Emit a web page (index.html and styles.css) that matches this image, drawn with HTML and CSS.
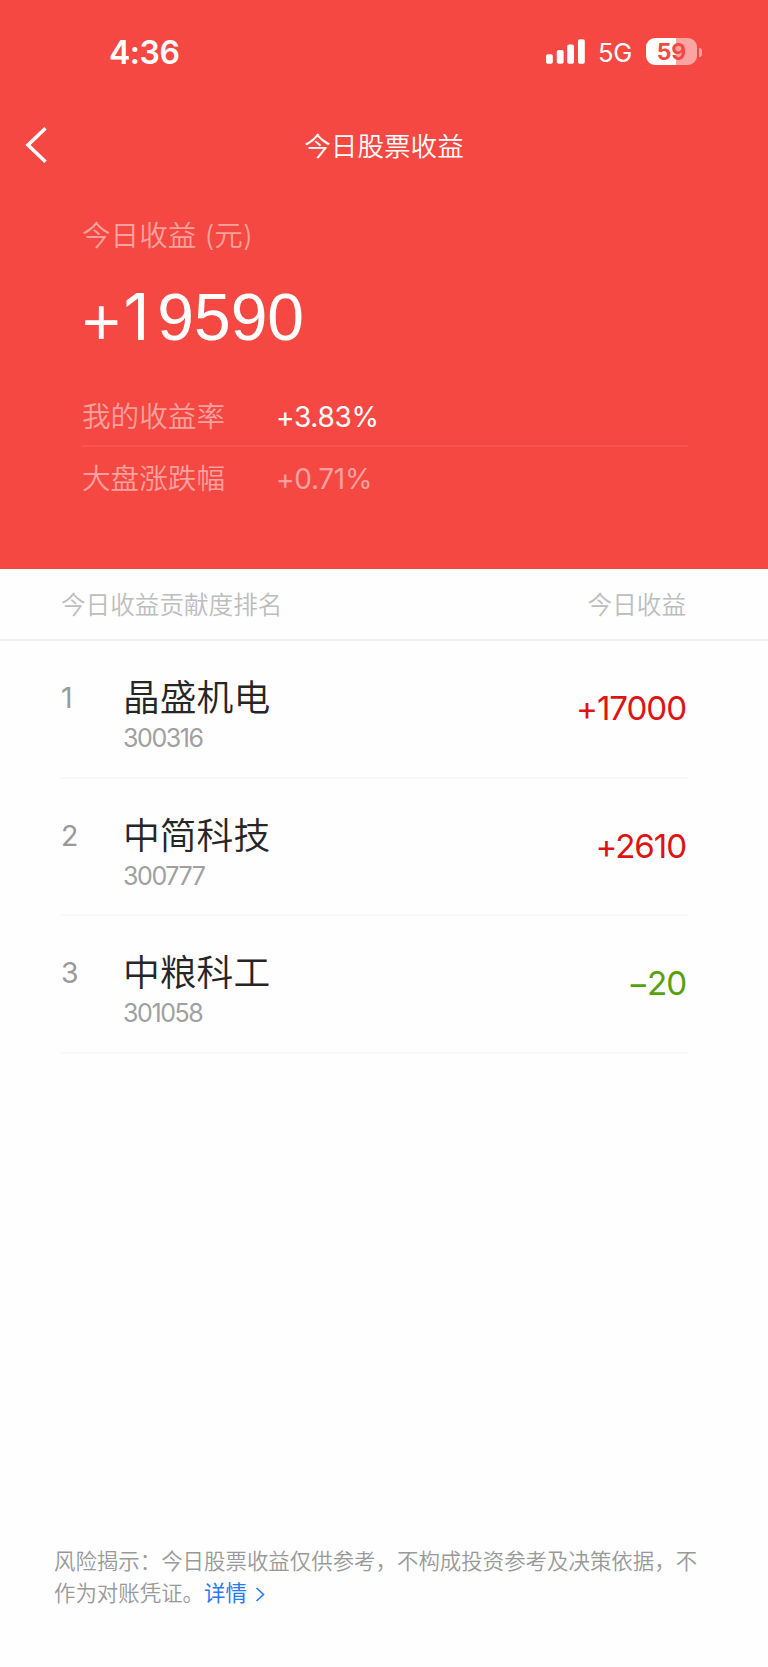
FILE: index.html
```
<!DOCTYPE html>
<html lang="zh-CN">
<head>
	<meta charset="UTF-8">
	<title>今日股票收益</title>
	<link rel="stylesheet" href="styles.css">
</head>
<body>
<div class="header">
	<div class="status">
		<span class="time">4:36</span>
		<svg class="signal" width="40" height="26" viewBox="0 0 40 26" fill="#fff">
			<rect x="0" y="15.3" width="6.8" height="9.5" rx="1.8"/>
			<rect x="10.8" y="11" width="6.8" height="13.8" rx="1.8"/>
			<rect x="21.2" y="5.5" width="6.8" height="19.3" rx="1.8"/>
			<rect x="32" y="0.2" width="6.8" height="24.6" rx="1.8"/>
		</svg>
		<span class="net">5G</span>
		<span class="battery">59</span>
		<span class="cap"></span>
	</div>
	<div class="nav">
		<svg class="back" width="24" height="38" viewBox="0 0 24 38" fill="none" stroke="#fff" stroke-width="3.6">
			<path d="M21.5 2.2L4 19L21.5 35.8"/>
		</svg>
		<h1>今日股票收益</h1>
	</div>
	<div class="total">
		<p class="label">今日收益 (元)</p>
		<p class="num"><span class="plus">+</span><span class="one">1</span>9590</p>
		<p class="rate"><span class="label">我的收益率</span><b>+3.83%</b></p>
		<p class="rate market"><span class="label">大盘涨跌幅</span><b>+0.71%</b></p>
	</div>
</div>
<div class="thead"><span>今日收益贡献度排名</span><span>今日收益</span></div>
<ul class="list">
	<li>
		<span class="rank">1</span>
		<div class="stock"><h3>晶盛机电</h3><p>300316</p></div>
		<span class="money up">+17000</span>
	</li>
	<li>
		<span class="rank">2</span>
		<div class="stock"><h3>中简科技</h3><p>300777</p></div>
		<span class="money up">+2610</span>
	</li>
	<li>
		<span class="rank">3</span>
		<div class="stock"><h3>中粮科工</h3><p>301058</p></div>
		<span class="money down">−20</span>
	</li>
</ul>
<div class="tips">
	风险揭示：今日股票收益仅供参考，不构成投资参考及决策依据，不作为对账凭证。<a class="more">详情<svg width="10" height="15" viewBox="0 0 10 15" fill="none" stroke="#2b78f6" stroke-width="1.6"><path d="M1.5 1L8.5 7.5L1.5 14"/></svg></a>
</div>
</body>
</html>
```

FILE: styles.css
```
body,ul,li,h1,h3,p{
	margin: 0;
	padding: 0;
}
li{
	list-style: none;
}
h1,h3,b{
	font-weight: normal;
}
body{
	display: flex;
	flex-direction: column;
	height: 1667px;
	background: #fefefe;
	font-family: Inter, "Noto Sans CJK SC", sans-serif;
	font-weight: 400;
	overflow: hidden;
}

/* 顶部红色区域 */
.header{
	box-sizing: border-box;
	height: 569px;
	flex: none;
	background: #f64843;
	color: #fff;
}
.status{
	display: flex;
	align-items: center;
	height: 104px;
	padding-left: 109px;
}
.time{
	width: 437px;
	font-size: 32px;
	font-weight: 600;
	letter-spacing: -0.5px;
}
.signal{
	margin-right: 12px;
}
.net{
	width: 48px;
	padding-top: 1px;
	font-size: 25.5px;
	letter-spacing: -0.3px;
}
.battery{
	width: 51px;
	height: 27px;
	border-radius: 9px;
	background: linear-gradient(90deg, #fff 59%, #fba4a1 59%);
	color: #f64843;
	font-size: 23px;
	font-weight: 700;
	line-height: 28px;
	text-align: center;
	margin-top: -1px;
}
.cap{
	width: 3px;
	height: 9px;
	margin-left: 2px;
	border-radius: 0 3px 3px 0;
	background: #fba4a1;
}
.nav{
	display: grid;
	grid-template-columns: 120px 1fr 120px;
	align-items: center;
	height: 84px;
}
.back{
	margin: -2px 0 0 24px;
}
.nav h1{
	font-size: 26.6px;
	font-weight: 350;
	line-height: 40px;
	text-align: center;
}
.total{
	padding: 18px 80px 0 82px;
}
.label{
	color: #fba19e;
	font-size: 28.6px;
	font-weight: 350;
	line-height: 60px;
}
.num{
	height: 119px;
	font-family: "Liberation Sans", sans-serif;
	font-size: 66px;
	line-height: 103px;
}
.plus{
	line-height: 1;
	vertical-align: -5px;
}
/* 数字1单独用无衬脚的字形 */
.one{
	display: inline-block;
	box-sizing: border-box;
	width: 36.7px;
	padding-left: 3px;
	font-family: Inter, sans-serif;
	font-size: 64px;
	line-height: 1;
}
.rate{
	display: flex;
	align-items: center;
	height: 62px;
	padding-top: 3px;
	border-bottom: 2px solid #f8534e;
	box-sizing: border-box;
}
.rate .label{
	width: 194px;
}
.rate b{
	font-size: 28px;
	letter-spacing: -0.3px;
}
.market{
	padding-top: 1px;
	border: 0;
	color: #fba19e;
}

/* 排名列表 */
.thead{
	display: flex;
	justify-content: space-between;
	height: 70px;
	padding: 0 82px 0 61px;
	border-bottom: 2px solid #f1f1f1;
	color: #bdbdbd;
	font-size: 24.6px;
	font-weight: 350;
	line-height: 73px;
}
.list{
	padding: 0 80px 0 61px;
}
.list li{
	display: flex;
	height: 135.5px;
	border-bottom: 2px solid #f8f8f8;
}
.rank{
	width: 62px;
	padding-top: 37px;
	color: #999;
	font-size: 28.5px;
	line-height: 40px;
}
.stock{
	flex: 1;
	padding-top: 32px;
}
.stock h3{
	color: #262626;
	font-size: 36.8px;
	font-weight: 350;
	line-height: 50px;
}
.stock p{
	color: #a0a0a0;
	font-size: 25px;
	line-height: 31px;
	letter-spacing: -1.4px;
}
.money{
	padding: 46px 2px 0 0;
	font-size: 33.2px;
	line-height: 42px;
	letter-spacing: -1.1px;
}
.up{
	color: #dc1414;
}
.down{
	color: #57a00c;
}

/* 底部风险提示 */
.tips{
	margin-top: auto;
	padding: 0 60px 58px 54px;
	color: #999;
	font-size: 21.45px;
	font-weight: 350;
	line-height: 32px;
}
.more{
	color: #2b78f6;
	font-weight: 400;
}
.more svg{
	margin-left: 8px;
	vertical-align: -1px;
}
```
